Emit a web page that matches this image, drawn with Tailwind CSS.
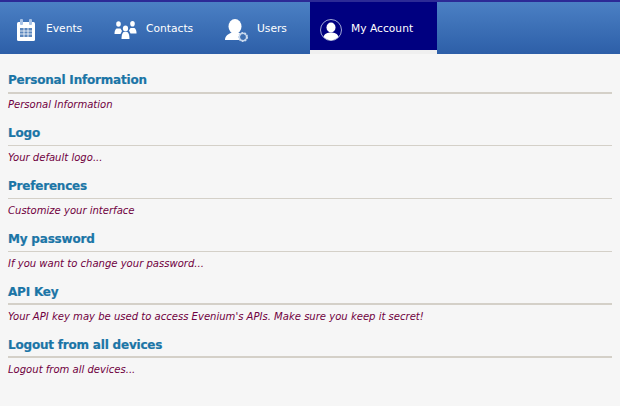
<!DOCTYPE html>
<html lang="en">

<head>
  <meta charset="UTF-8">
  <title>My Account</title>
  <script src="https://cdn.jsdelivr.net/npm/@tailwindcss/browser@4"></script>
</head>

<body class="bg-[#f6f6f6] font-['DejaVu_Sans',sans-serif] h-[406px] overflow-hidden">
  <!-- Menu -->
  <nav class="h-[54px] border-t-2 border-[#2c2a96] bg-gradient-to-b from-[#4b80c4] to-[#2d5fa8] flex text-white text-[10.7px]">
    <a class="w-[100px] flex items-center pt-[2px] pl-[17px] gap-[11px]">
      <svg class="mt-[2px]" width="18" height="22" viewBox="0 0 18 22">
        <rect x="0" y="3" width="18" height="19" rx="1.500" fill="#fff"/>
        <rect x="3" y="0" width="3" height="6" rx="1" fill="#a9c3e6"/>
        <rect x="12" y="0" width="3" height="6" rx="1" fill="#a9c3e6"/>
        <path d="M3 9h12v9H3z" fill="#5b86bd"/>
        <path d="M3 12h12M3 15h12M7 9v9M11 9v9" stroke="#fff" stroke-width="0.800"/>
      </svg>
      <span>Events</span>
    </a>
    <a class="w-[110px] flex items-center pt-[2px] pl-[14px] gap-[9px]">
      <svg class="mt-[2px]" width="23" height="18" viewBox="0 0 23 18" fill="#fff">
        <ellipse cx="4.500" cy="3" rx="2.300" ry="2.800"/>
        <path d="M0.500 13c0-3 .5-4 2-5.500h4l1.500 2.500-1.500 3z"/>
        <ellipse cx="18.500" cy="2.800" rx="2.300" ry="2.800"/>
        <path d="M22.500 12.500c0-3-.5-4-2-5.500h-4l-1.500 2.500 1.500 3z"/>
        <ellipse cx="11.500" cy="7.500" rx="2.600" ry="3"/>
        <path d="M7.500 18c0-3.500 .5-5.500 2-7h4c1.500 1.500 2 3.500 2 7z"/>
      </svg>
      <span>Contacts</span>
    </a>
    <a class="w-[100px] flex items-center pt-[2px] pl-[15px] gap-[9px]">
      <svg class="mt-[2px]" width="23" height="23" viewBox="0 0 23 23">
        <ellipse cx="10" cy="7.500" rx="6.500" ry="7.500" fill="#fff"/>
        <path d="M0 21c0-4 3-6 7-7.500h6c2 .5 3 1 4 2l-3 5.500z" fill="#fff"/>
        <circle cx="18" cy="18" r="4" fill="#3f70b2" stroke="#c9d9ee" stroke-width="2" stroke-dasharray="1.800 1"/>
        <circle cx="18" cy="18" r="3.600" fill="none" stroke="#c9d9ee" stroke-width="1.400"/>
      </svg>
      <span>Users</span>
    </a>
    <div class="w-[127px] h-[52px] bg-[#efefef]">
      <a class="h-[48px] bg-[#000080] flex items-center pt-[6px] pl-[10px] gap-[9px]">
        <svg class="mt-[2px]" width="22" height="22" viewBox="0 0 22 22">
          <circle cx="11" cy="11" r="10.500" fill="none" stroke="#c9d2ea" stroke-width="0.800"/>
          <ellipse cx="11" cy="8.500" rx="4.500" ry="5" fill="#fff"/>
          <path d="M3.500 18c1-3.500 4-4.500 7.500-4.500s6.500 1 7.500 4.500c-2 2-4.500 3.200-7.500 3.200s-5.500-1.200-7.500-3.200z" fill="#fff"/>
        </svg>
        <span>My Account</span>
      </a>
    </div>
  </nav>

  <!-- Sections -->
  <main class="px-[8px] pt-[18px]">
    <section class="h-[53px]">
      <h2 class="text-[12px] tracking-[-0.2px] [-webkit-text-stroke:0.2px] font-bold leading-[16px] text-[#1b75a6] border-b-2 border-[#d4d0c8] pb-[4px]">Personal Information</h2>
      <p class="text-[10.05px] italic leading-[12px] text-[#700040] mt-[5px]">Personal Information</p>
    </section>
    <section class="h-[53px]">
      <h2 class="text-[12px] tracking-[-0.2px] [-webkit-text-stroke:0.2px] font-bold leading-[16px] text-[#1b75a6] border-b border-[#d4d0c8] pb-[4px]">Logo</h2>
      <p class="text-[10.05px] italic leading-[12px] text-[#700040] mt-[6px]">Your default logo...</p>
    </section>
    <section class="h-[53px]">
      <h2 class="text-[12px] tracking-[-0.2px] [-webkit-text-stroke:0.2px] font-bold leading-[16px] text-[#1b75a6] border-b border-[#d4d0c8] pb-[4px]">Preferences</h2>
      <p class="text-[10.05px] italic leading-[12px] text-[#700040] mt-[6px]">Customize your interface</p>
    </section>
    <section class="h-[53px]">
      <h2 class="text-[12px] tracking-[-0.2px] [-webkit-text-stroke:0.2px] font-bold leading-[16px] text-[#1b75a6] border-b border-[#d4d0c8] pb-[4px]">My password</h2>
      <p class="text-[10.05px] italic leading-[12px] text-[#700040] mt-[6px]">If you want to change your password...</p>
    </section>
    <section class="h-[53px]">
      <h2 class="text-[12px] tracking-[-0.2px] [-webkit-text-stroke:0.2px] font-bold leading-[16px] text-[#1b75a6] border-b-2 border-[#d4d0c8] pb-[3px]">API Key</h2>
      <p class="text-[10.05px] italic leading-[12px] text-[#700040] mt-[6px]">Your API key may be used to access Evenium's APIs. Make sure you keep it secret!</p>
    </section>
    <section class="h-[53px]">
      <h2 class="text-[12px] tracking-[-0.2px] [-webkit-text-stroke:0.2px] font-bold leading-[16px] text-[#1b75a6] border-b-2 border-[#d4d0c8] pb-[3px]">Logout from all devices</h2>
      <p class="text-[10.05px] italic leading-[12px] text-[#700040] mt-[6px]">Logout from all devices...</p>
    </section>
  </main>
</body>

</html>
